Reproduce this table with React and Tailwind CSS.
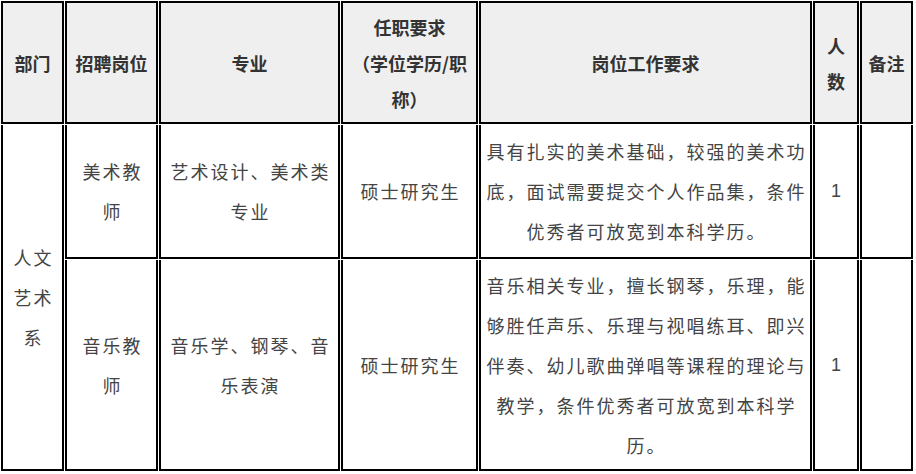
const headers = [
    ["部门"],
    ["招聘岗位"],
    ["专业"],
    ["任职要求", "（学位学历/职", "称）"],
    ["岗位工作要求"],
    ["人", "数"],
    ["备注"],
]

const rows = [
    {
        post: ["美术教", "师"],
        major: ["艺术设计、美术类", "专业"],
        degree: ["硕士研究生"],
        duty: [
            "具有扎实的美术基础，较强的美术功",
            "底，面试需要提交个人作品集，条件",
            "优秀者可放宽到本科学历。",
        ],
        count: "1",
    },
    {
        post: ["音乐教", "师"],
        major: ["音乐学、钢琴、音", "乐表演"],
        degree: ["硕士研究生"],
        duty: [
            "音乐相关专业，擅长钢琴，乐理，能",
            "够胜任声乐、乐理与视唱练耳、即兴",
            "伴奏、幼儿歌曲弹唱等课程的理论与",
            "教学，条件优秀者可放宽到本科学",
            "历。",
        ],
        count: "1",
    },
]

const Lines = ({ lines }) => (
    <div>
        {lines.map((line, i) => (
            <div key={i} className="whitespace-nowrap">{line}</div>
        ))}
    </div>
)

const HeadCell = ({ lines }) => (
    <div className="flex items-center justify-center border-2 border-black bg-[#efefef] text-center text-[18px] leading-[36px] font-bold text-[#333]">
        <Lines lines={lines} />
    </div>
)

const BodyCell = ({ lines, className = "" }) => (
    <div className={"flex items-center justify-center border-2 border-t-0 border-black bg-white text-center text-[18px] leading-[40px] tracking-[2px] pl-[2px] text-[#444] " + className}>
        <Lines lines={lines} />
    </div>
)

export default function App() {
    return (
        <div className="min-h-screen bg-white font-['Noto_Sans_CJK_SC',sans-serif]">
            <div className="grid w-fit grid-cols-[63px_93px_181px_137px_333px_46px_53px] grid-rows-[123px_134px_211px] gap-px p-px">
                {headers.map((h, i) => <HeadCell key={i} lines={h} />)}

                <BodyCell lines={["人文", "艺术", "系"]} className="row-span-2" />

                {rows.map((r, i) => (
                    <div key={i} className="contents">
                        <BodyCell lines={r.post} />
                        <BodyCell lines={r.major} />
                        <BodyCell lines={r.degree} />
                        <BodyCell lines={r.duty} />
                        <BodyCell lines={[r.count]} className="font-['Liberation_Sans',sans-serif]" />
                        <BodyCell lines={[""]} />
                    </div>
                ))}
            </div>
        </div>
    )
}
